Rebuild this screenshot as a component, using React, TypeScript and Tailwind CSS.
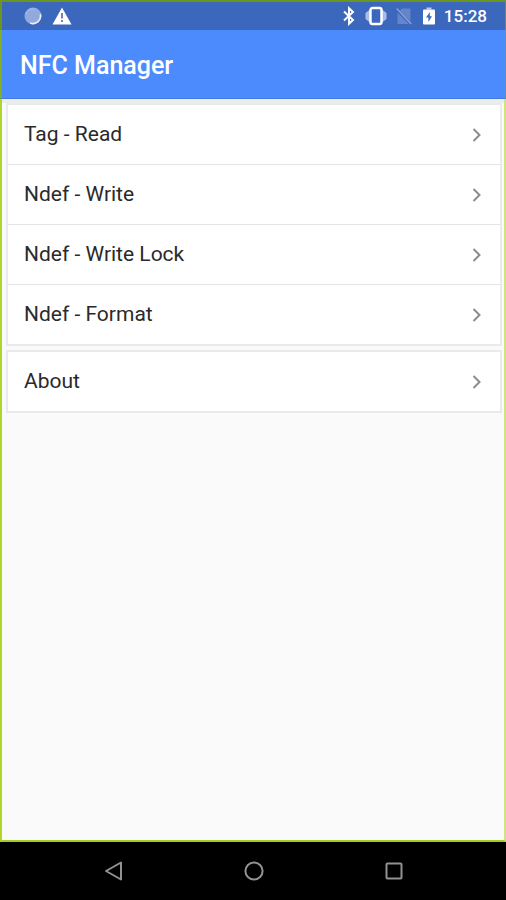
import React from "react";

type SVGProps = React.SVGAttributes<SVGElement>;

interface MenuItem {
  id: string;
  label: string;
}

const tagItems: MenuItem[] = [
  { id: "read", label: "Tag - Read" },
  { id: "write", label: "Ndef - Write" },
  { id: "lock", label: "Ndef - Write Lock" },
  { id: "format", label: "Ndef - Format" },
];

const otherItems: MenuItem[] = [{ id: "about", label: "About" }];

export default function App() {
  return (
    <div className="flex min-h-screen flex-col bg-black font-[Roboto,sans-serif]">
      <StatusBar />
      <header className="flex h-[69px] items-center border-r border-b border-l-2 border-r-[#6c9c50] border-b-[#427bdf] border-l-[#80b020] bg-[#4c8bfe] px-[18px] pt-1">
        <h1 className="text-[25px] leading-8 font-medium text-white">
          NFC Manager
        </h1>
      </header>
      <main className="flex flex-1 flex-col border-x-2 border-b-2 border-r-[#cfe480] border-b-[#a5cb27] border-l-[#b1d62b] bg-[#fafafa]">
        <div className="h-1 bg-[#ebecec]" />
        <div className="flex flex-col gap-1 pr-0.5 pl-1">
          <MenuCard items={tagItems} />
          <MenuCard items={otherItems} />
        </div>
      </main>
      <NavigationBar />
    </div>
  );
}

function StatusBar() {
  return (
    <div className="flex h-[30px] items-center justify-between border-t-2 border-r border-l-2 border-[#6b951b] bg-[#3b67bd] pr-[18px] pl-[22px] text-white">
      <div className="flex items-center gap-[10px]">
        <SyncIcon className="h-[18px] w-[18px]" />
        <WarningIcon className="h-[18px] w-5" />
      </div>
      <div className="flex items-center">
        <BluetoothIcon className="h-5 w-3" />
        <VibrateIcon className="ml-[10px] h-5 w-[22px]" />
        <NoSimIcon className="ml-[9px] h-[18px] w-4" />
        <BatteryIcon className="ml-[11px] h-[18px] w-3" />
        <span className="ml-[9px] text-[17px] leading-none font-medium">
          15:28
        </span>
      </div>
    </div>
  );
}

function MenuCard({ items }: { items: MenuItem[] }) {
  return (
    <ul className="divide-y divide-[#e3e4e7] border-2 border-[#e9eaec] bg-white">
      {items.map((item) => (
        <li key={item.id}>
          <button
            type="button"
            className="flex h-[59px] w-full items-center justify-between pr-[18px] pl-4 text-left text-[21px] leading-[33px] text-[#2a2a2a]"
          >
            {item.label}
            <ChevronIcon className="h-[14px] w-[10px] text-[#8c8c8c]" />
          </button>
        </li>
      ))}
    </ul>
  );
}

function NavigationBar() {
  return (
    <nav className="flex h-[58px] items-center justify-center gap-[116px] bg-black pl-0.5 text-[#929292]">
      <button type="button" aria-label="Back">
        <BackIcon className="h-6 w-6" />
      </button>
      <button type="button" aria-label="Home">
        <HomeIcon className="h-6 w-6" />
      </button>
      <button type="button" aria-label="Recent apps">
        <RecentIcon className="h-6 w-6" />
      </button>
    </nav>
  );
}

const SyncIcon: React.FC<SVGProps> = (props) => {
  return (
    <svg {...props} viewBox="0 0 18 18" fill="none">
      <circle cx="9" cy="9" r="8.5" fill="#91a9dc" />
      <path
        d="M16.3 7.2A7.5 7.5 0 0 1 6.2 16"
        stroke="#e9effb"
        strokeWidth="1.6"
      />
      <path d="M2 7A7.4 7.4 0 0 1 11 2" stroke="#a9bce5" strokeWidth="1" />
    </svg>
  );
};

const WarningIcon: React.FC<SVGProps> = (props) => {
  return (
    <svg {...props} viewBox="0 0 20 18">
      <path d="M10 0.5 19.5 17.5H0.5Z" fill="currentColor" />
      <path d="M9 6h2v5.5H9zM9 13h2v2H9z" fill="#7b83ac" />
    </svg>
  );
};

const BluetoothIcon: React.FC<SVGProps> = (props) => {
  return (
    <svg
      {...props}
      viewBox="0 0 12 20"
      fill="none"
      stroke="currentColor"
      strokeWidth="2"
    >
      <path d="M1 5.5 10 14 6 17.8V2.2L10 6 1 14.5" />
    </svg>
  );
};

const VibrateIcon: React.FC<SVGProps> = (props) => {
  return (
    <svg {...props} viewBox="0 0 22 20">
      <path
        d="M5 3.5 0.5 7v6L5 16.5ZM17 3.5 21.5 7v6L17 16.5Z"
        fill="#a9bde6"
      />
      <rect
        x="5.5"
        y="2"
        width="11"
        height="16"
        rx="2"
        fill="#3b67bd"
        stroke="currentColor"
        strokeWidth="2.4"
      />
    </svg>
  );
};

const NoSimIcon: React.FC<SVGProps> = (props) => {
  return (
    <svg {...props} viewBox="0 0 16 18">
      <path d="M6 1.5h8.5v13L3.8 3.8Z" fill="#6485ca" />
      <path d="M1.5 5.5 13 17H1.5Z" fill="#6485ca" />
      <path d="M.7 1.5 15.3 17" stroke="#8ca5d9" strokeWidth="1.3" />
    </svg>
  );
};

const BatteryIcon: React.FC<SVGProps> = (props) => {
  return (
    <svg {...props} viewBox="0 0 12 18">
      <path d="M3.5 0.5h5v2h-5z" fill="#b9c9e9" />
      <rect y="2.5" width="12" height="15" rx="1" fill="currentColor" />
      <path d="M6.8 5 3 10.5h2.4V15L9 9.3H6.8Z" fill="#3b67bd" />
    </svg>
  );
};

const ChevronIcon: React.FC<SVGProps> = (props) => {
  return (
    <svg
      {...props}
      viewBox="0 0 10 14"
      fill="none"
      stroke="currentColor"
      strokeWidth="2"
    >
      <path d="m1.5 1 6 6-6 6" />
    </svg>
  );
};

const BackIcon: React.FC<SVGProps> = (props) => {
  return (
    <svg
      {...props}
      viewBox="0 0 24 24"
      fill="none"
      stroke="currentColor"
      strokeWidth="2"
      strokeLinejoin="round"
    >
      <path d="M19 3.5v17L4 12Z" />
    </svg>
  );
};

const HomeIcon: React.FC<SVGProps> = (props) => {
  return (
    <svg
      {...props}
      viewBox="0 0 24 24"
      fill="none"
      stroke="currentColor"
      strokeWidth="2"
    >
      <circle cx="12" cy="12" r="8.6" />
    </svg>
  );
};

const RecentIcon: React.FC<SVGProps> = (props) => {
  return (
    <svg
      {...props}
      viewBox="0 0 24 24"
      fill="none"
      stroke="currentColor"
      strokeWidth="2"
    >
      <rect x="4.5" y="4.5" width="15" height="15" rx="1" />
    </svg>
  );
};
